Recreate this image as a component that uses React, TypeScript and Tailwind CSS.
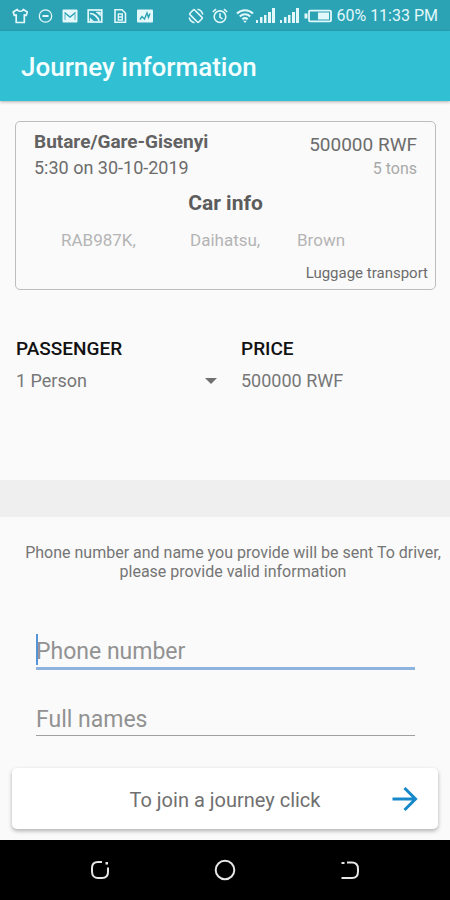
import React from "react";

const SignalIcon = () => (
  <svg viewBox="0 0 20 16" className="h-4 w-5" fill="currentColor">
    <rect x="0" y="12" width="2" height="3" />
    <rect x="4" y="9" width="2.500" height="6" />
    <rect x="8" y="7" width="2.500" height="8" />
    <rect x="12" y="4" width="3" height="11" />
    <rect x="16" y="0" width="3" height="15" />
  </svg>
);

const StatusBar = () => {
  return (
    <div className="flex h-[31px] items-center justify-between bg-[#2ba3b4] px-3 text-[#e3f8fb]">
      {/* Notifications */}
      <div className="flex items-center gap-[9px]">
        <svg viewBox="0 0 16 16" className="size-4" fill="none" stroke="currentColor" strokeWidth="1.7" strokeLinejoin="round">
          <path d="M5.2 1.500 1.200 4 2.300 7.500 4.200 6.800V14.500H12.300V6.800L14.200 7.500 15.300 4 11.300 1.500C10.300 3.800 6.200 3.800 5.200 1.500Z" />
        </svg>
        <svg viewBox="0 0 16 16" className="size-4" fill="none" stroke="currentColor" strokeWidth="1.3">
          <circle cx="8.500" cy="8" r="6.200" />
          <path d="M5.500 8h6" strokeWidth="2" />
        </svg>
        <svg viewBox="0 0 16 16" className="size-4">
          <rect x="0.500" y="1.500" width="15" height="13" rx="1" fill="currentColor" />
          <path d="M2.500 4.500 8 9 13.500 4.500" fill="none" stroke="#2ba3b4" strokeWidth="1.400" />
          <path d="M3 6V12M13 6V12" fill="none" stroke="#2ba3b4" strokeWidth="0.800" />
        </svg>
        <svg viewBox="0 0 16 16" className="size-4" fill="none" stroke="currentColor" strokeWidth="1.7">
          <rect x="1.2" y="2" width="13.6" height="12" />
          <path d="M3 5.500C7 5.500 11 9 12 13" />
          <path d="M3 13V10L6.500 13ZM9 4h4.500v4Z" fill="currentColor" strokeWidth="0.5" />
        </svg>
        <svg viewBox="0 0 16 16" className="size-4" fill="none" stroke="currentColor" strokeWidth="1.6">
          <path d="M3 1.800h7l3.500 3.500V14.200H3Z" />
          <path d="M6.300 6h4v6h-4ZM6.300 9h4" strokeWidth="1.3" />
        </svg>
        <svg viewBox="0 0 16 16" className="size-4">
          <rect x="0" y="1.500" width="16" height="13" rx="1" fill="currentColor" />
          <path d="M3 11.500 5 8.500 7.500 11 10 5 11.500 9.500 13 5.500" fill="none" stroke="#2ba3b4" strokeWidth="1.4" />
        </svg>
      </div>

      {/* System state */}
      <div className="flex items-center">
        <svg viewBox="0 0 16 16" className="mr-2 size-4" fill="none" stroke="currentColor" strokeWidth="1.6">
          <rect x="4.700" y="1.800" width="6.600" height="12.400" rx="1" transform="rotate(-45 8 8)" />
          <path d="M9.500 1.200A7 7 0 0 1 14.800 6.500M6.500 14.800A7 7 0 0 1 1.200 9.500" strokeWidth="1.5" />
        </svg>
        <svg viewBox="0 0 16 16" className="mr-2 size-4" fill="none" stroke="currentColor" strokeWidth="1.6">
          <circle cx="8" cy="8.7" r="5.8" />
          <path d="M8 5.200V9l2.500 2M.8 4 4 1.200M15.200 4 12 1.200" />
        </svg>
        <svg viewBox="0 0 18 16" className="mr-0.5 h-4 w-[18px]" fill="none" stroke="currentColor" strokeWidth="2">
          <path d="M1 5.500C5.500 1 12.500 1 17 5.500M3.800 8.500C6.800 5.600 11.200 5.600 14.200 8.500M6.300 11.300C8 9.800 10 9.800 11.700 11.300" />
          <path d="M7.200 12.800h3.600L9 15Z" fill="currentColor" stroke="none" />
        </svg>
        <SignalIcon />
        <span className="w-1" />
        <SignalIcon />
        <svg viewBox="0 0 28 14" className="mx-1 h-[14px] w-7" fill="none" stroke="currentColor">
          <path d="M2 4.500v5" strokeWidth="3" />
          <rect x="5" y="1.700" width="22" height="10.600" rx="1" strokeWidth="1.800" />
          <rect x="14" y="3.500" width="11" height="7" fill="currentColor" stroke="none" />
        </svg>
        <span className="text-base leading-5">60% 11:33 PM</span>
      </div>
    </div>
  );
};

const JourneyCard = () => {
  return (
    <section className="mr-[14px] ml-[15px] mt-5 rounded-[5px] border border-[#bdbdbd] pt-[7px] pb-1.5">
      <div className="flex justify-between px-[18px]">
        <div>
          <h2 className="text-[19px] leading-[26px] font-bold text-[#626262]">Butare/Gare-Gisenyi</h2>
          <p className="text-[18px] leading-[25px] text-[#6c6c6c]">5:30 on 30-10-2019</p>
        </div>
        <div className="pt-[3px] text-right">
          <p className="text-[19px] leading-[25px] text-[#6c6c6c]">500000 RWF</p>
          <p className="text-base leading-6 text-[#a9a9a9]">5 tons</p>
        </div>
      </div>
      <h3 className="mt-2 text-center text-[21px] leading-7 font-bold text-[#5c5c5c]">Car info</h3>
      <div className="mt-[11px] flex pl-[45px] text-[17px] leading-6 text-[#b4b4b4]">
        <span className="w-[129px]">RAB987K,</span>
        <span className="w-[107px]">Daihatsu,</span>
        <span>Brown</span>
      </div>
      <p className="mt-[11px] pr-[7px] text-right text-[15px] leading-5 text-[#6c6c6c]">Luggage transport</p>
    </section>
  );
};

const App = () => {
  return (
    <div className="flex min-h-screen flex-col bg-[#fafafa] font-['Roboto',sans-serif]">
      <StatusBar />
      <header className="bg-[#31c0d3] pt-[21px] pb-[19px] pl-[21px] shadow-[0_1px_3px_rgba(0,0,0,0.3)]">
        <h1 className="text-[26px] leading-[30px] font-medium text-[#f4ffff]">Journey information</h1>
      </header>

      <main className="flex flex-1 flex-col">
        <JourneyCard />

        {/* Passenger and price */}
        <div className="mt-[45px] grid grid-cols-2 px-4 pb-[85px]">
          <div className="relative pr-2">
            <label htmlFor="passenger" className="block text-[19px] leading-7 font-medium text-[#111]">
              PASSENGER
            </label>
            <select
              id="passenger"
              className="mt-1 block w-full appearance-none bg-transparent text-[18px] leading-7 text-[#777] outline-none"
            >
              <option>1 Person</option>
            </select>
            <svg viewBox="0 0 12 6" className="pointer-events-none absolute right-2 bottom-[11px] h-1.5 w-3">
              <path d="M0 0h12L6 6Z" fill="#707070" />
            </svg>
          </div>
          <div className="pl-4">
            <h2 className="text-[19px] leading-7 font-medium text-[#111]">PRICE</h2>
            <p className="mt-1 text-[18px] leading-7 text-[#777]">500000 RWF</p>
          </div>
        </div>

        <div className="h-[37px] bg-[#efefef]" />

        <p className="mt-[26px] pr-1 pl-5 text-center text-base leading-[19px] text-[#757575]">
          Phone number and name you provide will be sent To driver, please provide valid information
        </p>

        <form className="flex flex-1 flex-col">
          <div className="mt-[53px] mr-[35px] ml-9 flex flex-col gap-8">
            <div className="relative">
              <input
                type="tel"
                aria-label="Phone number"
                placeholder="Phone number"
                className="block w-full border-b-[3px] border-[#8fb3df] bg-transparent pt-[3px] text-[23px] leading-[30px] text-[#444] outline-none placeholder:text-[#929292]"
              />
              {/* text cursor */}
              <span className="absolute top-0 left-0 h-[31px] w-0.5 bg-[#5594d6]" />
            </div>
            <input
              type="text"
              aria-label="Full names"
              placeholder="Full names"
              className="block w-full border-b border-[#a0a0a0] bg-transparent pt-[3px] text-[23px] leading-[30px] text-[#444] outline-none placeholder:text-[#929292]"
            />
          </div>

          <button
            type="button"
            className="relative mx-3 mt-auto mb-[11px] flex h-[61px] items-center justify-center rounded-[5px] bg-white pt-0.5 text-[20px] text-[#707070] shadow-[0_2px_4px_rgba(0,0,0,0.3)]"
          >
            To join a journey click
            <svg viewBox="0 0 26 26" className="absolute inset-y-0 right-5 my-auto size-[26px]" fill="none" stroke="#1688c9" strokeWidth="3">
              <path d="M0.500 13H23M12.500 2 23.500 13 12.500 24" />
            </svg>
          </button>
        </form>
      </main>

      {/* Android navigation */}
      <nav className="flex h-[60px] items-center bg-black px-9 text-[#e6e6e6]">
        <button type="button" aria-label="Recent apps" className="flex flex-1 justify-center">
          <svg viewBox="0 0 20 20" className="size-5" fill="none" stroke="currentColor" strokeWidth="2">
            <path d="M13 2H9C5 2 3 4.500 3 8v3.500C3 15.500 5.500 18 9 18h4c4 0 6-2.500 6-6V7.500" />
            <rect x="16.500" y="2" width="2.500" height="2.500" fill="currentColor" stroke="none" />
          </svg>
        </button>
        <button type="button" aria-label="Home" className="flex flex-1 justify-center">
          <svg viewBox="0 0 22 22" className="size-[22px]" fill="none" stroke="currentColor" strokeWidth="2">
            <circle cx="11" cy="11" r="9.300" />
          </svg>
        </button>
        <button type="button" aria-label="Back" className="flex flex-1 justify-center">
          <svg viewBox="0 0 20 20" className="size-5" fill="none" stroke="currentColor" strokeWidth="2">
            <path d="M6 2.500H11C15 2.500 17 5 17 9v2.500C17 15.500 15 18 11 18H0.500" />
            <rect x="0.500" y="2" width="3" height="2" fill="currentColor" stroke="none" />
          </svg>
        </button>
      </nav>
    </div>
  );
};

export default App;
